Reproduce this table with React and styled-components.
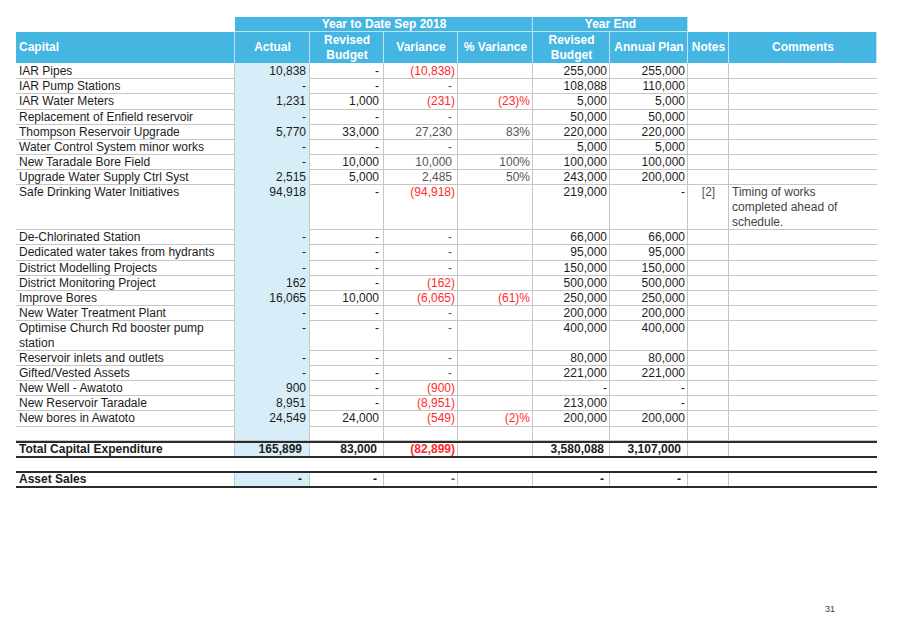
import React from 'react';
import styled, { createGlobalStyle } from 'styled-components';

const GlobalStyle = createGlobalStyle`
  html, body {
    margin: 0;
    padding: 0;
    background: #fff;
  }
  body {
    font-family: "Liberation Sans", Arial, sans-serif;
  }
`;

const COLS = '219px 75px 74px 74px 75px 77px 78px 41px 148px';
const LINE = '#c6c6c6';
const HEAD_LINE = '#bfe2f2';
const PITCH = 15.1;

// name, actual, revised budget, variance, % variance, YE revised budget, annual plan, notes, comments, lines
const rows = [
  ['IAR Pipes', '10,838', '-', '(10,838)', '', '255,000', '255,000'],
  ['IAR Pump Stations', '-', '-', '-', '', '108,088', '110,000'],
  ['IAR Water Meters', '1,231', '1,000', '(231)', '(23)%', '5,000', '5,000'],
  ['Replacement of Enfield reservoir', '-', '-', '-', '', '50,000', '50,000'],
  ['Thompson Reservoir Upgrade', '5,770', '33,000', '27,230', '83%', '220,000', '220,000'],
  ['Water Control System minor works', '-', '-', '-', '', '5,000', '5,000'],
  ['New Taradale Bore Field', '-', '10,000', '10,000', '100%', '100,000', '100,000'],
  ['Upgrade Water Supply Ctrl Syst', '2,515', '5,000', '2,485', '50%', '243,000', '200,000'],
  ['Safe Drinking Water Initiatives', '94,918', '-', '(94,918)', '', '219,000', '-', '[2]',
    ['Timing of works', 'completed ahead of', 'schedule.'], 3],
  ['De-Chlorinated Station', '-', '-', '-', '', '66,000', '66,000'],
  ['Dedicated water takes from hydrants', '-', '-', '-', '', '95,000', '95,000'],
  ['District Modelling Projects', '-', '-', '-', '', '150,000', '150,000'],
  ['District Monitoring Project', '162', '-', '(162)', '', '500,000', '500,000'],
  ['Improve Bores', '16,065', '10,000', '(6,065)', '(61)%', '250,000', '250,000'],
  ['New Water Treatment Plant', '-', '-', '-', '', '200,000', '200,000'],
  ['Optimise Church Rd booster pump station', '-', '-', '-', '', '400,000', '400,000', '', null, 2],
  ['Reservoir inlets and outlets', '-', '-', '-', '', '80,000', '80,000'],
  ['Gifted/Vested Assets', '-', '-', '-', '', '221,000', '221,000'],
  ['New Well - Awatoto', '900', '-', '(900)', '', '-', '-'],
  ['New Reservoir Taradale', '8,951', '-', '(8,951)', '', '213,000', '-'],
  ['New bores in Awatoto', '24,549', '24,000', '(549)', '(2)%', '200,000', '200,000'],
  ['', '', '', '', '', '', ''],
];

const isNeg = (v) => v.startsWith('(');

const Page = styled.div`
  width: 906px;
  height: 635px;
  display: flex;
  flex-direction: column;
  box-sizing: border-box;
  padding: 17px 0 0 16px;
  font-size: 12px;
  color: #1c1c1c;
`;

const Sheet = styled.div`
  width: 861px;
  display: flex;
  flex-direction: column;
`;

const Row = styled.div`
  display: grid;
  grid-template-columns: ${COLS};
  ${p => p.$lines && `height: ${p.$lines * PITCH}px;`}
  ${p => p.$bold && `
    border-top: 2px solid #2b2b2b;
    border-bottom: 2px solid #2b2b2b;
    font-weight: bold;
  `}
`;

const BandCell = styled.div`
  grid-column: ${p => p.$span};
  height: 15px;
  line-height: 15px;
  text-align: center;
  font-weight: bold;
  color: #fff;
  background: ${p => (p.$blue ? '#45b5e2' : 'transparent')};
  box-shadow: ${p => (p.$blue ? `inset -1px -1px 0 ${HEAD_LINE}` : 'none')};
`;

const HeadCell = styled.div`
  height: 31.3px;
  display: flex;
  align-items: center;
  justify-content: ${p => (p.$left ? 'flex-start' : 'center')};
  padding: 0 3px;
  text-align: center;
  line-height: 15px;
  font-weight: bold;
  color: #fff;
  background: #45b5e2;
  box-shadow: inset -1px 0 0 ${HEAD_LINE};
`;

const Cell = styled.div`
  box-sizing: border-box;
  padding: ${p => (p.$bold ? 0 : 1)}px ${p => p.$pr ?? 3}px 0 3px;
  line-height: ${p => (p.$bold ? '13px' : `${PITCH}px`)};
  text-align: ${p => p.$align || 'right'};
  color: ${p => p.$color || '#1c1c1c'};
  background: ${p => (p.$shade ? '#d7edf8' : 'transparent')};
  box-shadow: ${p => (p.$bold ? `inset ${p.$noRight ? 0 : -1}px 0 0 ${LINE}`
    : `inset ${p.$noRight ? 0 : -1}px -1px 0 ${LINE}`)};
`;

const CommentLine = styled.div`
  white-space: nowrap;
`;

const Gap = styled.div`
  height: 13px;
`;

const Footer = styled.div`
  margin-top: auto;
  display: flex;
  justify-content: flex-end;
  padding: 0 71px 21px 0;
  font-size: 9px;
  color: #444;
`;

const DataRow = ({ r, bold }) => {
  const [name, actual, rb, variance, pct, ybud, plan, notes, comment, lines] = r;
  const extra = bold ? 4 : 0;
  const grey = '#555';
  const red = '#ff2a2a';
  return (
    <Row $bold={bold} $lines={bold ? null : lines || 1}>
      <Cell $align="left" $bold={bold}>{name}</Cell>
      <Cell $shade $bold={bold} $pr={4 + extra}>{actual}</Cell>
      <Cell $bold={bold} $pr={5 + (bold ? 2 : 0)}>{rb}</Cell>
      <Cell
        $bold={bold}
        $pr={isNeg(variance) || bold ? 3 : 6}
        $color={isNeg(variance) ? red : grey}
      >
        {variance}
      </Cell>
      <Cell $bold={bold} $pr={3} $color={isNeg(pct) ? red : grey}>{pct}</Cell>
      <Cell $bold={bold} $pr={3 + (bold ? 3 : 0)}>{ybud}</Cell>
      <Cell $bold={bold} $pr={3 + (bold ? 4 : 0)}>{plan}</Cell>
      <Cell $bold={bold} $align="center" $color={grey}>{notes}</Cell>
      <Cell $bold={bold} $align="left" $noRight $color="#444">
        {comment && comment.map(l => <CommentLine key={l}>{l}</CommentLine>)}
      </Cell>
    </Row>
  );
};

const App = () => (
  <>
    <GlobalStyle />
    <Page>
      <Sheet>
        <Row>
          <BandCell $span="1" />
          <BandCell $span="2 / span 4" $blue>Year to Date Sep 2018</BandCell>
          <BandCell $span="6 / span 2" $blue>Year End</BandCell>
          <BandCell $span="8 / span 2" />
        </Row>
        <Row>
          <HeadCell $left>Capital</HeadCell>
          <HeadCell>Actual</HeadCell>
          <HeadCell>Revised<br />Budget</HeadCell>
          <HeadCell>Variance</HeadCell>
          <HeadCell>% Variance</HeadCell>
          <HeadCell>Revised<br />Budget</HeadCell>
          <HeadCell>Annual Plan</HeadCell>
          <HeadCell>Notes</HeadCell>
          <HeadCell>Comments</HeadCell>
        </Row>
        {rows.map((r, i) => (
          <DataRow key={i} r={r} />
        ))}
        <DataRow bold r={['Total Capital Expenditure', '165,899', '83,000', '(82,899)', '', '3,580,088', '3,107,000']} />
        <Gap />
        <DataRow bold r={['Asset Sales', '-', '-', '-', '', '-', '-']} />
      </Sheet>
      <Footer>31</Footer>
    </Page>
  </>
);

export default App;
